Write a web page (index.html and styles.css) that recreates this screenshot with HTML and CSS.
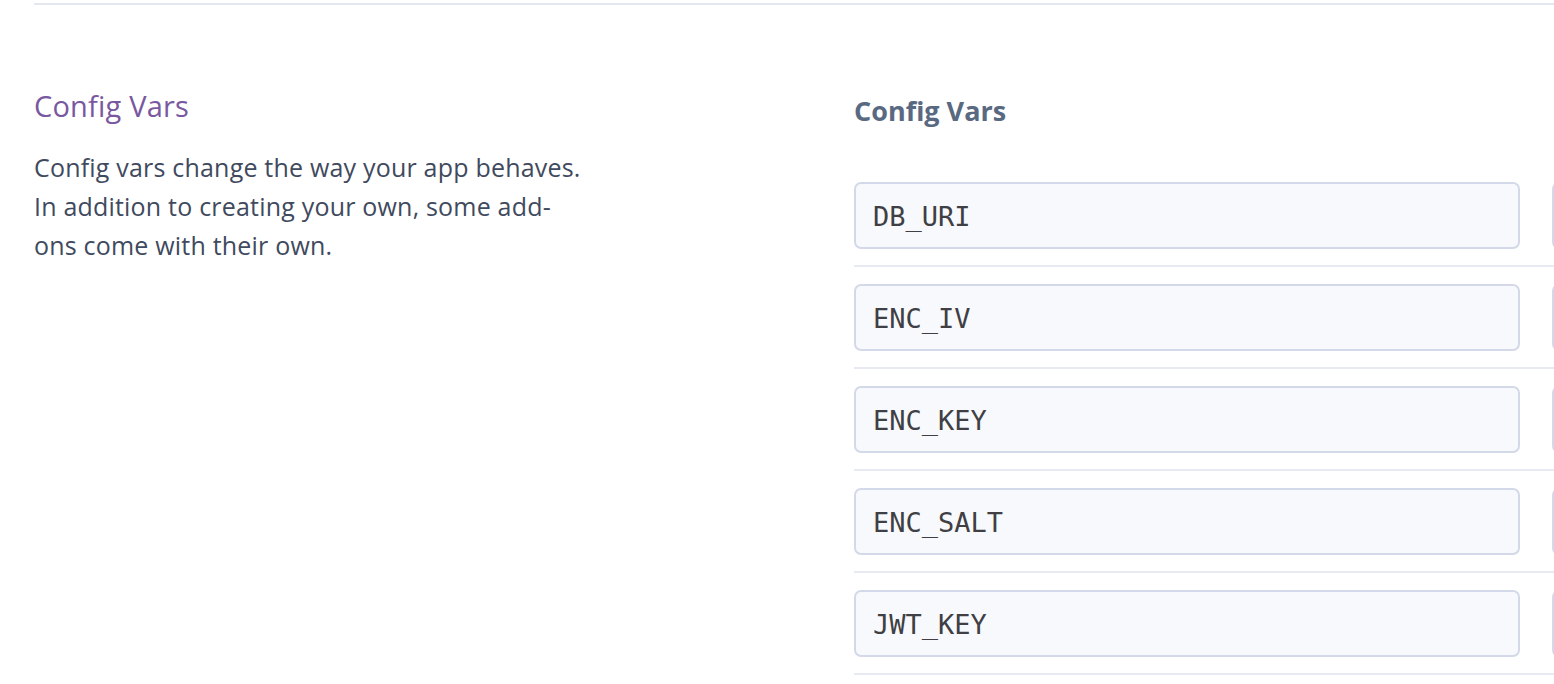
FILE: index.html
```html
<!DOCTYPE html>
<html>
<head>
<meta charset="utf-8">
<link rel="stylesheet" href="styles.css">
</head>
<body>
<div class="page">
  <div class="top-rule"></div>
  <section class="settings">
    <div class="intro">
      <h2 class="intro-title">Config Vars</h2>
      <p class="intro-text">Config vars change the way your app behaves. In addition to creating your own, some add-ons come with their own.</p>
    </div>
    <div class="panel">
      <h3 class="panel-title">Config Vars</h3>
      <div class="rows">
        <div class="row"><div class="field key">DB_URI</div><div class="field value"></div></div>
        <div class="row"><div class="field key">ENC_IV</div><div class="field value"></div></div>
        <div class="row"><div class="field key">ENC_KEY</div><div class="field value"></div></div>
        <div class="row"><div class="field key">ENC_SALT</div><div class="field value"></div></div>
        <div class="row"><div class="field key">JWT_KEY</div><div class="field value"></div></div>
      </div>
    </div>
  </section>
</div>
</body>
</html>
```

FILE: styles.css
```css
html, body {
  margin: 0;
  padding: 0;
  background: #ffffff;
  overflow: hidden;
}
body {
  font-family: "Open Sans", "Liberation Sans", sans-serif;
  width: 1554px;
  height: 684px;
}
.page {
  padding-left: 34px;
}
.top-rule {
  margin-top: 3px;
  height: 2px;
  background: #e3e7f1;
}
.settings {
  display: grid;
  grid-template-columns: 820px 1fr;
  padding-top: 83px;
}
.intro-title {
  margin: 0;
  font-weight: 400;
  font-size: 29px;
  line-height: 36px;
  letter-spacing: 0.2px;
  color: #79589f;
}
.intro-text {
  margin: 24px 0 0;
  width: 553px;
  font-size: 25px;
  line-height: 39px;
  letter-spacing: 0.2px;
  color: #3f4a5e;
}
.panel {
  overflow: hidden;
}
.panel-title {
  margin: 5px 0 0;
  font-size: 27px;
  line-height: 36px;
  font-weight: 700;
  color: #596981;
}
.rows {
  margin-top: 36px;
}
.row {
  display: flex;
  gap: 32px;
  padding: 17px 0 16px;
  border-bottom: 2px solid #e7eaf2;
}
.field {
  box-sizing: border-box;
  height: 67px;
  border: 2px solid #d3d9e8;
  border-radius: 7px;
  background: #f8f9fc;
  flex-shrink: 0;
  font-family: "DejaVu Sans Mono", "Liberation Mono", monospace;
  font-size: 27px;
  line-height: 65px;
  color: #3f3f44;
  padding-left: 17px;
}
.key {
  width: 666px;
}
.value {
  width: 600px;
}
```
